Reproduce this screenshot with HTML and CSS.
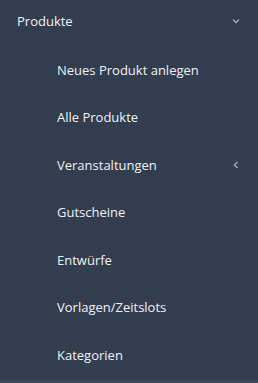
FILE: index.html
```html
<!DOCTYPE html>
<html lang="de">
<head>
  <meta charset="UTF-8">
  <meta name="viewport" content="width=device-width, initial-scale=1.0">
  <title>Produkte</title>
  <link rel="stylesheet" href="styles.css">
</head>
<body>
  <nav class="sidebar">
    <div class="menu-head">
      <span>Produkte</span>
      <svg class="chev" width="8" height="6" viewBox="0 0 8 6"><path d="M1 1.5 L4 4.5 L7 1.5" fill="none" stroke="currentColor" stroke-width="1.6"/></svg>
    </div>
    <ul class="submenu">
      <li>Neues Produkt anlegen</li>
      <li>Alle Produkte</li>
      <li>
        <span>Veranstaltungen</span>
        <svg class="chev" width="6" height="8" viewBox="0 0 6 8"><path d="M4.5 1 L1.5 4 L4.5 7" fill="none" stroke="currentColor" stroke-width="1.6"/></svg>
      </li>
      <li>Gutscheine</li>
      <li>Entwürfe</li>
      <li>Vorlagen/Zeitslots</li>
      <li>Kategorien</li>
    </ul>
  </nav>
</body>
</html>
```
FILE: styles.css
```css
body {
  margin: 0;
  background-color: #323d50;
  font-family: "Open Sans", "Noto Sans", sans-serif;
  font-size: 13px;
  color: #f0f2f4;
}

.sidebar {
  height: 380px;
  border-bottom: 3px solid #3b475a;
}

.menu-head {
  display: flex;
  align-items: center;
  justify-content: space-between;
  height: 42px;
  padding: 0 18px 0 17px;
}

.chev {
  color: #9ba3b1;
}

.submenu {
  list-style: none;
  margin: 0;
  padding: 4px 0 0 0;
}

.submenu li {
  display: flex;
  align-items: center;
  justify-content: space-between;
  height: 47.5px;
  padding: 0 19px 0 57px;
}
```
